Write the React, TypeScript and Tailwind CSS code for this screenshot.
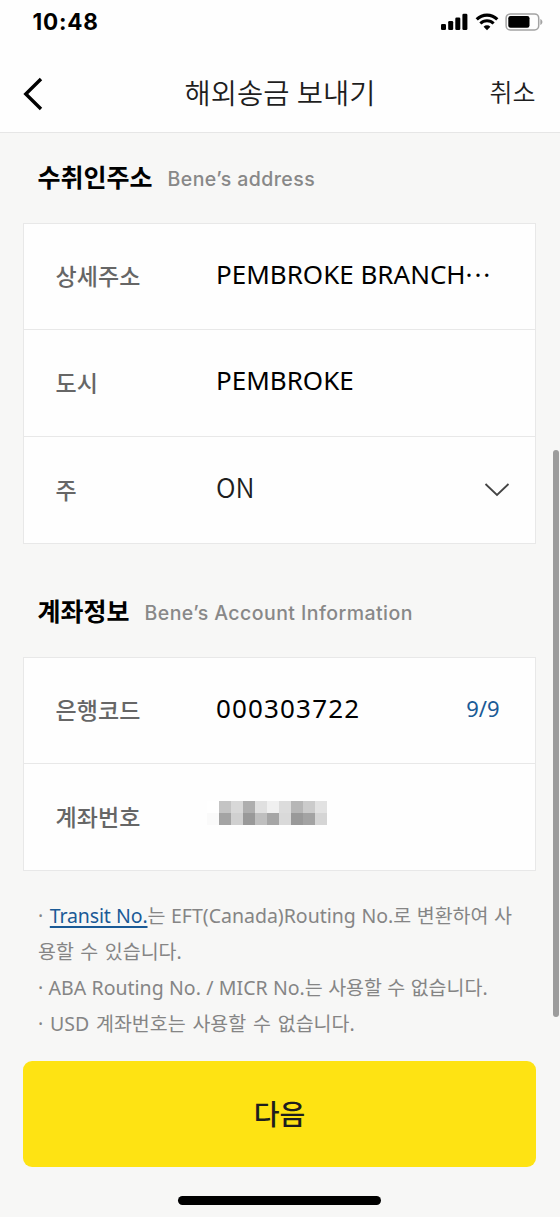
import type { ReactNode } from "react";

const MASK_ROWS = [
  ["#ffffff", "#c4c4c4", "#d8d8d8", "#aeaeae", "#e0e0e0", "#f0f0f0", "#dcdcdc", "#b6b6b6", "#cbcbcb", "#e2e2e2"],
  ["#fafafa", "#a4a4a4", "#d0d0d0", "#999999", "#bfbfbf", "#a6a6a6", "#d9d9d9", "#999999", "#a3a3a3", "#d5d5d5"],
];

function StatusBar() {
  return (
    <div className="flex h-[44px] items-start justify-between pl-[32.5px] pr-[17.5px]">
      <span className="mt-[8px] font-['Inter',sans-serif] text-[22.5px] leading-[28px] font-bold tracking-[0.8px] text-black">
        10:48
      </span>
      <div className="mt-[13px] flex">
        <svg width="27" height="18" viewBox="0 0 27 18" className="block">
          <rect x="0" y="11" width="5" height="6" rx="1.3" />
          <rect x="7.2" y="8" width="5" height="9" rx="1.3" />
          <rect x="14.3" y="4.5" width="5" height="12.5" rx="1.3" />
          <rect x="21.4" y="0.7" width="5" height="16.3" rx="1.3" />
        </svg>
        <svg width="24" height="18" viewBox="0 0 24 18" className="ml-[7px] block">
          <path d="M1.7 6.4a14.6 14.6 0 0 1 20.6 0" fill="none" stroke="#000" strokeWidth="3.1" />
          <path d="M5.4 10.5a9.3 9.3 0 0 1 13.2 0" fill="none" stroke="#000" strokeWidth="3" />
          <path d="M8.6 13.7a4.8 4.8 0 0 1 6.8 0L12 17.2z" />
        </svg>
        <svg width="38" height="18" viewBox="0 0 38 18" className="ml-[6px] block">
          <rect x="1.1" y="0.9" width="32.6" height="16" rx="4.2" fill="none" stroke="#a3a3a3" strokeWidth="1.5" />
          <rect x="3.3" y="3" width="21.2" height="11.8" rx="2.2" />
          <path d="M35.3 6v6c1.3-.5 2.1-1.6 2.1-3s-.8-2.5-2.1-3z" fill="#a3a3a3" />
        </svg>
      </div>
    </div>
  );
}

function SectionTitle({ title, sub }: { title: string; sub: string }) {
  return (
    <div className="flex h-[36px] items-center pl-[37.5px] leading-[36px] whitespace-nowrap">
      <h2 className="text-[25px] font-bold text-black">{title}</h2>
      <span className="mt-[4px] ml-[15px] font-['Inter',sans-serif] text-[19.5px] font-[550] tracking-[0.44px] text-[#888]">
        {sub}
      </span>
    </div>
  );
}

function Row({ label, children }: { label: string; children: ReactNode }) {
  return (
    <div className="flex h-[107px] items-center border-b border-[#e8e8e8] pb-[2px] pl-[31.5px] first:h-[106px]">
      <span className="mt-[2px] w-[160.5px] shrink-0 text-[23px] font-medium tracking-[0.1px] text-[#666]">{label}</span>
      {children}
    </div>
  );
}

export default function App() {
  return (
    <div className="relative h-[1217px] w-[560px] overflow-hidden bg-[#f7f7f6] font-['Noto_Sans','Noto_Sans_CJK_KR',sans-serif]">
      <header className="h-[133px] border-b border-[#e6e6e6] bg-[#fefefe]">
        <StatusBar />
        <div className="grid h-[98px] grid-cols-[1fr_auto_1fr] items-center">
          <svg width="22" height="34" viewBox="0 0 22 34" className="mt-[2px] ml-[22px] block">
            <path d="M19 2 3.8 17 19 32" fill="none" stroke="#000" strokeWidth="3.4" />
          </svg>
          <h1 className="text-[28.5px] font-[350] text-[#1e1e1e]">해외송금 보내기</h1>
          <button className="mr-[24.5px] justify-self-end text-[25px] font-[350] text-[#1e1e1e]">취소</button>
        </div>
      </header>

      <main>
        <div className="mt-[26px]">
          <SectionTitle title="수취인주소" sub="Bene’s address" />
        </div>
        <section className="mx-[23px] mt-[28px] w-[513px] border border-b-0 border-[#e8e8e8] bg-[#fefefe]">
          <Row label="상세주소">
            <span className="mb-[3px] text-[26px] whitespace-nowrap text-black">
              PEMBROKE BRANCH<span className="tracking-[1.8px]">···</span>
            </span>
          </Row>
          <Row label="도시">
            <span className="mb-[3px] text-[26px] text-black">PEMBROKE</span>
          </Row>
          <Row label="주">
            <span className="mb-[4px] font-['Noto_Sans_CJK_KR',sans-serif] text-[26.5px] font-[350] text-[#1e1e1e]">
              ON
            </span>
            <svg width="26" height="16" viewBox="0 0 26 16" className="mt-[2px] mr-[25.5px] ml-auto block">
              <path d="M1.5 2 13 13 24.5 2" fill="none" stroke="#444" strokeWidth="1.8" />
            </svg>
          </Row>
        </section>

        <div className="mt-[49px]">
          <SectionTitle title="계좌정보" sub="Bene’s Account Information" />
        </div>
        <section className="mx-[23px] mt-[28px] w-[513px] border border-b-0 border-[#e8e8e8] bg-[#fefefe]">
          <Row label="은행코드">
            <span className="mb-[3px] text-[26px] tracking-[1.15px] text-black">000303722</span>
            <span className="mr-[35.5px] mb-[2px] ml-auto text-[22px] text-[#1a5a96]">9/9</span>
          </Row>
          <Row label="계좌번호">
            <div className="mb-[6px] -ml-[9px] grid grid-cols-10">
              {MASK_ROWS.flat().map((color, i) => (
                <span key={i} className="size-[12px]" style={{ backgroundColor: color }} />
              ))}
            </div>
          </Row>
        </section>

        <div className="mt-[27px] ml-[38px] text-[19.5px] leading-[36px] font-normal whitespace-nowrap text-[#858585]">
          <p className="[word-spacing:0.5px]">
            ·<span className="ml-[1px]"> </span>
            <a className="tracking-[-0.15px] text-[#1a5a96] underline decoration-[1.5px] underline-offset-3">Transit No.</a>는 EFT(Canada)Routing No.로 변환하여 사
          </p>
          <p className="[word-spacing:1.4px]">용할 수 있습니다.</p>
          <p className="[word-spacing:0.3px]">· ABA Routing No. / MICR No.는 사용할 수 없습니다.</p>
          <p className="[word-spacing:1.7px]">· USD 계좌번호는 사용할 수 없습니다.</p>
        </div>

        <button className="mx-[23px] mt-[19px] block h-[106px] w-[513px] rounded-[9px] bg-[#fee313] text-[28px] font-medium text-[#1e1e1e]">
          다음
        </button>
      </main>

      <div className="mt-[29px] ml-[178px] h-[9px] w-[203px] rounded-full bg-black" />
      <div className="absolute top-[450px] right-[1px] h-[567px] w-[6px] rounded-full bg-[#9c9c9c]" />
    </div>
  );
}
